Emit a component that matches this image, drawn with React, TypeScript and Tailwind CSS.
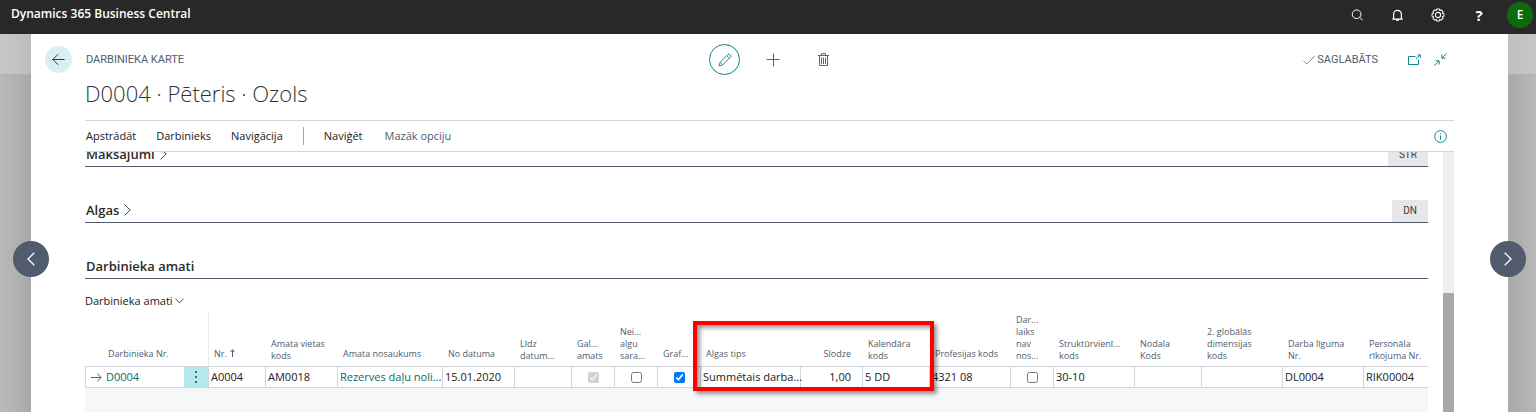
import type { ReactNode } from "react";

type IconProps = { className: string; children: ReactNode; box?: string };

function Icon({ className, children, box = "0 0 16 16" }: IconProps) {
  return (
    <svg className={className} viewBox={box} fill="none" stroke="currentColor" strokeWidth="1" aria-hidden="true">
      {children}
    </svg>
  );
}

function TopBar() {
  return (
    <header className="flex h-[34px] shrink-0 items-center justify-between bg-[#282828] pl-[11px] pr-[3px] text-white">
      <a href="#home" className="pb-[7px] text-[12px] leading-5 font-semibold">
        Dynamics 365 Business Central
      </a>
      <div className="flex h-full items-center pb-[4px]">
        <button aria-label="Meklēt" className="grid w-[40px] place-items-center">
          <Icon className="size-[12px]">
            <circle cx="7.5" cy="7" r="5.8" strokeWidth="1.3" />
            <path d="M11.5 11.2 L15.5 15" strokeWidth="1.3" />
          </Icon>
        </button>
        <button aria-label="Paziņojumi" className="grid w-[41px] place-items-center">
          <Icon className="size-[13px]">
            <path d="M3.2 12.5 V6.5 a4.8 4.8 0 0 1 9.6 0 V12.5 M1.5 12.5 H14.5 M6.3 12.8 a1.8 2 0 0 0 3.4 0" strokeWidth="1.5" />
          </Icon>
        </button>
        <button aria-label="Iestatījumi" className="grid w-[40px] place-items-center">
          <Icon className="size-[14px]">
            <circle cx="8" cy="8" r="3" strokeWidth="1.2" />
            <path
              d="M6.6 1.2 h2.8 l.6 1.6 1.7-.6 2 2 -.6 1.7 1.7.7 v2.8 l-1.7.7 .6 1.7 -2 2 -1.7-.6 -.6 1.6 H6.6 l-.6-1.6 -1.7.6 -2-2 .6-1.7 -1.7-.7 V6.6 l1.7-.7 -.6-1.7 2-2 1.7.6 z"
              strokeWidth="1.2"
            />
          </Icon>
        </button>
        <button aria-label="Palīdzība" className="w-[42px] text-[15px] leading-5 font-bold">
          ?
        </button>
        <button className="ml-[7px] size-[26px] rounded-full bg-[#0b6a0b] text-[12px] font-semibold">E</button>
      </div>
    </header>
  );
}

function CardHeader() {
  return (
    <div className="mx-[54px] h-[87px] shrink-0 border-b border-[#d2d5d9]">
      <div className="-ml-10 grid grid-cols-[1fr_auto_1fr] items-center pt-[10px]">
        <div className="flex items-center gap-[14px]">
          <button aria-label="Atpakaļ" className="grid size-[27px] place-items-center rounded-full bg-[#d9eff2] text-[#333]">
            <Icon className="size-[13px]">
              <path d="M15.5 8 H1 M7.5 1.5 L1 8 L7.5 14.5" strokeWidth="1.2" />
            </Icon>
          </button>
          <span className="font-[Roboto,sans-serif] text-[11px] leading-4 text-[#505c6d]">DARBINIEKA KARTE</span>
        </div>
        <div className="flex items-center pl-10 text-[#0f8387]">
          <button aria-label="Rediģēt" className="grid size-[31px] place-items-center rounded-full border border-[#0f8387]">
            <Icon className="size-[14px]">
              <path d="M1.2 14.8 L2.4 10.6 L11.3 1.7 a1.6 1.6 0 0 1 2.3 0 l.7 .7 a1.6 1.6 0 0 1 0 2.3 L5.4 13.6 Z M2.4 10.6 L5.4 13.6 M10 3 L13 6" />
            </Icon>
          </button>
          <button aria-label="Jauns" className="ml-[26px] grid size-[14px] place-items-center">
            <Icon className="size-[14px]" box="0 0 14 14">
              <path d="M7.5 0.5 V13.5 M0.5 6.5 H13.5" />
            </Icon>
          </button>
          <button aria-label="Dzēst" className="ml-[37px] grid size-[13px] place-items-center">
            <Icon className="h-[13px] w-[11px]" box="0 0 11 13">
              <path d="M0 2.5 H11 M3.5 2.3 V.7 H7.5 V2.3 M1.5 2.5 V12.5 H9.5 V2.5 M3.5 4.5 V11 M5.5 4.5 V11 M7.5 4.5 V11" />
            </Icon>
          </button>
        </div>
        <div className="flex items-center justify-end pr-[7px] text-[#0f8387]">
          <Icon className="mr-[2px] size-[12px] text-[#505c6d]">
            <path d="M.5 9 L5 13.5 L15.5 3" />
          </Icon>
          <span className="font-[Roboto,sans-serif] text-[11px] leading-4 text-[#505c6d]">SAGLABĀTS</span>
          <button aria-label="Atvērt jaunā logā" className="ml-[30px]">
            <Icon className="h-[12px] w-[13px]" box="0 0 13 12">
              <path d="M7.5 2.5 H.5 V10.5 H10.5 V5.5 M8 5 L12 1.2 M9.3 .9 H12.3 V3.8" />
            </Icon>
          </button>
          <button aria-label="Sakļaut" className="ml-[13px]">
            <Icon className="size-[13px]" box="0 0 13 13">
              <path d="M12.7 .3 L8 5 M7.8 1.5 V5.2 H11.5 M.3 12.7 L5 8 M1.5 7.8 H5.2 V11.5" />
            </Icon>
          </button>
        </div>
      </div>
      <h1 className="mt-[2px] text-[22px] leading-8 font-light text-[#333]">D0004 · Pēteris · Ozols</h1>
    </div>
  );
}

function ActionBar() {
  return (
    <nav className="mx-[54px] flex h-[31px] shrink-0 items-center border-b border-[#d2d5d9] pl-px text-[11px] leading-4 text-[#212121]">
      <button>Apstrādāt</button>
      <button className="ml-[20px]">Darbinieks</button>
      <button className="ml-[20px]">Navigācija</button>
      <span className="mx-[20px] h-[18px] w-px bg-[#a0a7b1]" />
      <button>Naviģēt</button>
      <button className="ml-[22px] text-[#505c6d]">Mazāk opciju</button>
      <button aria-label="Informācija" className="mr-[7px] ml-auto text-[#0f8387]">
        <Icon className="size-[13px]">
          <circle cx="8" cy="8" r="7.2" strokeWidth="1.2" />
          <path d="M8 6.8 V12 M8 4 V5.3" strokeWidth="1.2" />
        </Icon>
      </button>
    </nav>
  );
}

function SectionTitle({ title, badge, open }: { title: string; badge?: string; open?: boolean }) {
  return (
    <div className="mb-[33px] flex h-[23px] items-stretch justify-between border-b border-[#505c6d]">
      <h2 className="pl-px text-[13px] leading-5 font-semibold text-[#2b2b2b]">
        <button className="flex items-center gap-[5px]">
          {title}
          {!open && (
            <Icon className="h-[12px] w-[7px]" box="0 0 7 12">
              <path d="M.6 .6 L6.2 6 L.6 11.4" strokeWidth=".9" />
            </Icon>
          )}
        </button>
      </h2>
      {badge && (
        <button className="bg-[#e6e7e9] px-[11px] font-[Roboto,sans-serif] text-[10px] leading-5 text-[#404040]">{badge}</button>
      )}
    </div>
  );
}

type Column = { head: string[]; value?: string; width: string; check?: "on" | "off" | "locked"; link?: boolean; right?: boolean };

const columns: Column[] = [
  { head: ["Nr."], value: "A0004", width: "w-[57px]" },
  { head: ["Amata vietas", "kods"], value: "AM0018", width: "w-[72px]" },
  { head: ["Amata nosaukums"], value: "Rezerves daļu noli...", width: "w-[105px]", link: true },
  { head: ["No datuma"], value: "15.01.2020", width: "w-[72px]" },
  { head: ["Līdz", "datum..."], value: "", width: "w-[57px]" },
  { head: ["Gal...", "amats"], width: "w-[43px]", check: "locked" },
  { head: ["Nei...", "algu", "sara..."], width: "w-[43px]", check: "off" },
  { head: ["Graf..."], width: "w-[43px]", check: "on" },
  { head: ["Algas tips"], value: "Summētais darba...", width: "w-[100px]" },
  { head: ["Slodze"], value: "1,00", width: "w-[62px]", right: true },
  { head: ["Kalendāra", "kods"], value: "5 DD", width: "w-[67px]" },
  { head: ["Profesijas kods"], value: "4321 08", width: "w-[81px]" },
  { head: ["Dar...", "laiks", "nav", "nos..."], width: "w-[43px]", check: "off" },
  { head: ["Struktūrvienī...", "kods"], value: "30-10", width: "w-[81px]" },
  { head: ["Nodala", "Kods"], value: "", width: "w-[67px]" },
  { head: ["2. globālās", "dimensijas", "kods"], value: "", width: "w-[81px]" },
  { head: ["Darba līguma", "Nr."], value: "DL0004", width: "w-[81px]" },
  { head: ["Personāla", "rīkojuma Nr."], value: "RIK00004", width: "w-[64px]" },
];

function JobsTable() {
  return (
    <div className="relative mt-[4px]">
      <table className="w-full table-fixed border-separate border-spacing-0 text-left whitespace-nowrap">
        <colgroup>
          <col className="w-[99px]" />
          <col className="w-[25px]" />
          {columns.map((c) => (
            <col key={c.head.join(" ")} className={c.width} />
          ))}
        </colgroup>
        <thead className="text-[9px] leading-3 text-[#505c6d]">
          <tr className="h-[53px] align-bottom">
            <th className="pb-[6px] pl-[23px] font-normal">Darbinieka Nr.</th>
            <th className="border-r border-[#e8eaec]" aria-label="Darbības" />
            {columns.map((c) => (
              <th
                key={c.head.join(" ")}
                className={`pl-[5px] font-normal ${c.head.length > 1 ? "pb-[4px]" : "pb-[6px]"} ${c.right ? "pr-[12px] text-right" : ""}`}
              >
                {c.head.map((line) => (
                  <span key={line} className="block">
                    {line}
                    {line === "Nr." && c.value === "A0004" && (
                      <Icon className="ml-[3px] inline h-[8px] w-[5px] align-baseline" box="0 0 5 8">
                        <path d="M2.5 8 V.8 M.4 3 L2.5 .8 L4.6 3" />
                      </Icon>
                    )}
                  </span>
                ))}
              </th>
            ))}
          </tr>
        </thead>
        <tbody className="text-[11px] leading-4 text-[#212121]">
          <tr className="h-[22px]">
            <td className="border-y border-l border-[#d2d5d9] p-0">
              <a href="#d0004" className="flex items-center gap-[4px] pl-[5px] text-[#006d70]">
                <Icon className="h-[9px] w-[11px] text-[#505c6d]" box="0 0 11 9">
                  <path d="M0 4.5 H10 M6.3 .7 L10.2 4.5 L6.3 8.3" />
                </Icon>
                D0004
              </a>
            </td>
            <td className="border-y border-r border-[#d2d5d9] bg-[#b2e9ed] p-0">
              <button aria-label="Vairāk opciju" className="grid w-full place-items-center text-[#5b6b52]">
                <Icon className="h-[12px] w-[2px]" box="0 0 2 12">
                  <path d="M1 0 V2 M1 5 V7 M1 10 V12" strokeWidth="2" />
                </Icon>
              </button>
            </td>
            {columns.map((c, i) => (
              <td
                key={c.head.join(" ")}
                className={`border-y border-[#d2d5d9] p-0 ${i < columns.length - 1 ? "border-r" : ""} ${c.check ? "text-center" : c.right ? "pr-[11px] text-right" : "pl-[2px]"}`}
              >
                {c.check ? (
                  <input
                    type="checkbox"
                    aria-label={c.head.join(" ")}
                    defaultChecked={c.check !== "off"}
                    disabled={c.check === "locked"}
                    className="block size-[11px] justify-self-center"
                  />
                ) : c.link ? (
                  <a href="#amats" className="text-[#006d70]">
                    {c.value}
                  </a>
                ) : (
                  c.value
                )}
              </td>
            ))}
          </tr>
        </tbody>
      </table>
      <div className="h-[24px] bg-[#f6f7f9]" />
      <div className="pointer-events-none absolute top-[8px] left-[45.3%] h-[70px] w-[17.9%] border-4 border-[#fe0000] shadow-[3px_3px_4px_#0006,inset_3px_3px_4px_#0006]" />
    </div>
  );
}

export default function App() {
  return (
    <div className="flex h-screen flex-col overflow-hidden font-['Open_Sans','Noto_Sans',sans-serif]">
      <TopBar />
      <main className="relative flex min-h-0 flex-1 bg-[#b4b4b4]">
        <div className="flex w-[31px] shrink-0 flex-col bg-linear-to-r from-[#bababa] to-[#a9a9a9]">
          <div className="h-[41px] border-b border-[#b0b0b0] bg-linear-to-r from-[#c8c8c8] to-[#bcbcbc]" />
        </div>
        <section className="flex min-w-0 flex-1 flex-col bg-white">
          <CardHeader />
          <ActionBar />
          <div className="mx-[54px] flex min-h-0 flex-1 overflow-hidden">
            <div className="-mt-[8px] min-w-0 flex-1">
              <SectionTitle title="Maksājumi" badge="STR" />
              <SectionTitle title="Algas" badge="DN" />
              <SectionTitle title="Darbinieka amati" open />
              <button className="-mt-[19px] flex items-center gap-[2px] text-[11px] leading-4 text-[#212121]">
                Darbinieka amati
                <Icon className="h-[6px] w-[9px]" box="0 0 9 6">
                  <path d="M.4 .6 L4.5 5 L8.6 .6" strokeWidth=".8" />
                </Icon>
              </button>
              <JobsTable />
            </div>
            <div className="ml-[15px] flex w-[11px] shrink-0 flex-col bg-[#eeeeee]">
              <div className="mt-auto h-[119px] bg-[#a9a9a9]" />
            </div>
          </div>
        </section>
        <div className="flex w-[28px] shrink-0 flex-col bg-linear-to-r from-[#a9a9a9] to-[#b8b8b8]">
          <div className="h-[41px] border-b border-[#b0b0b0] bg-linear-to-r from-[#bfbfbf] to-[#c6c6c6]" />
        </div>
        <button aria-label="Iepriekšējais" className="absolute top-[207px] left-[13px] grid size-[36px] place-items-center rounded-full bg-[#505c6d] text-white">
          <Icon className="h-[14px] w-[8px]" box="0 0 8 14">
            <path d="M7.3 .7 L1 7 L7.3 13.3" strokeWidth="1.3" />
          </Icon>
        </button>
        <button aria-label="Nākamais" className="absolute top-[207px] right-[10px] grid size-[36px] place-items-center rounded-full bg-[#505c6d] text-white">
          <Icon className="h-[14px] w-[8px]" box="0 0 8 14">
            <path d="M.7 .7 L7 7 L.7 13.3" strokeWidth="1.3" />
          </Icon>
        </button>
      </main>
    </div>
  );
}
